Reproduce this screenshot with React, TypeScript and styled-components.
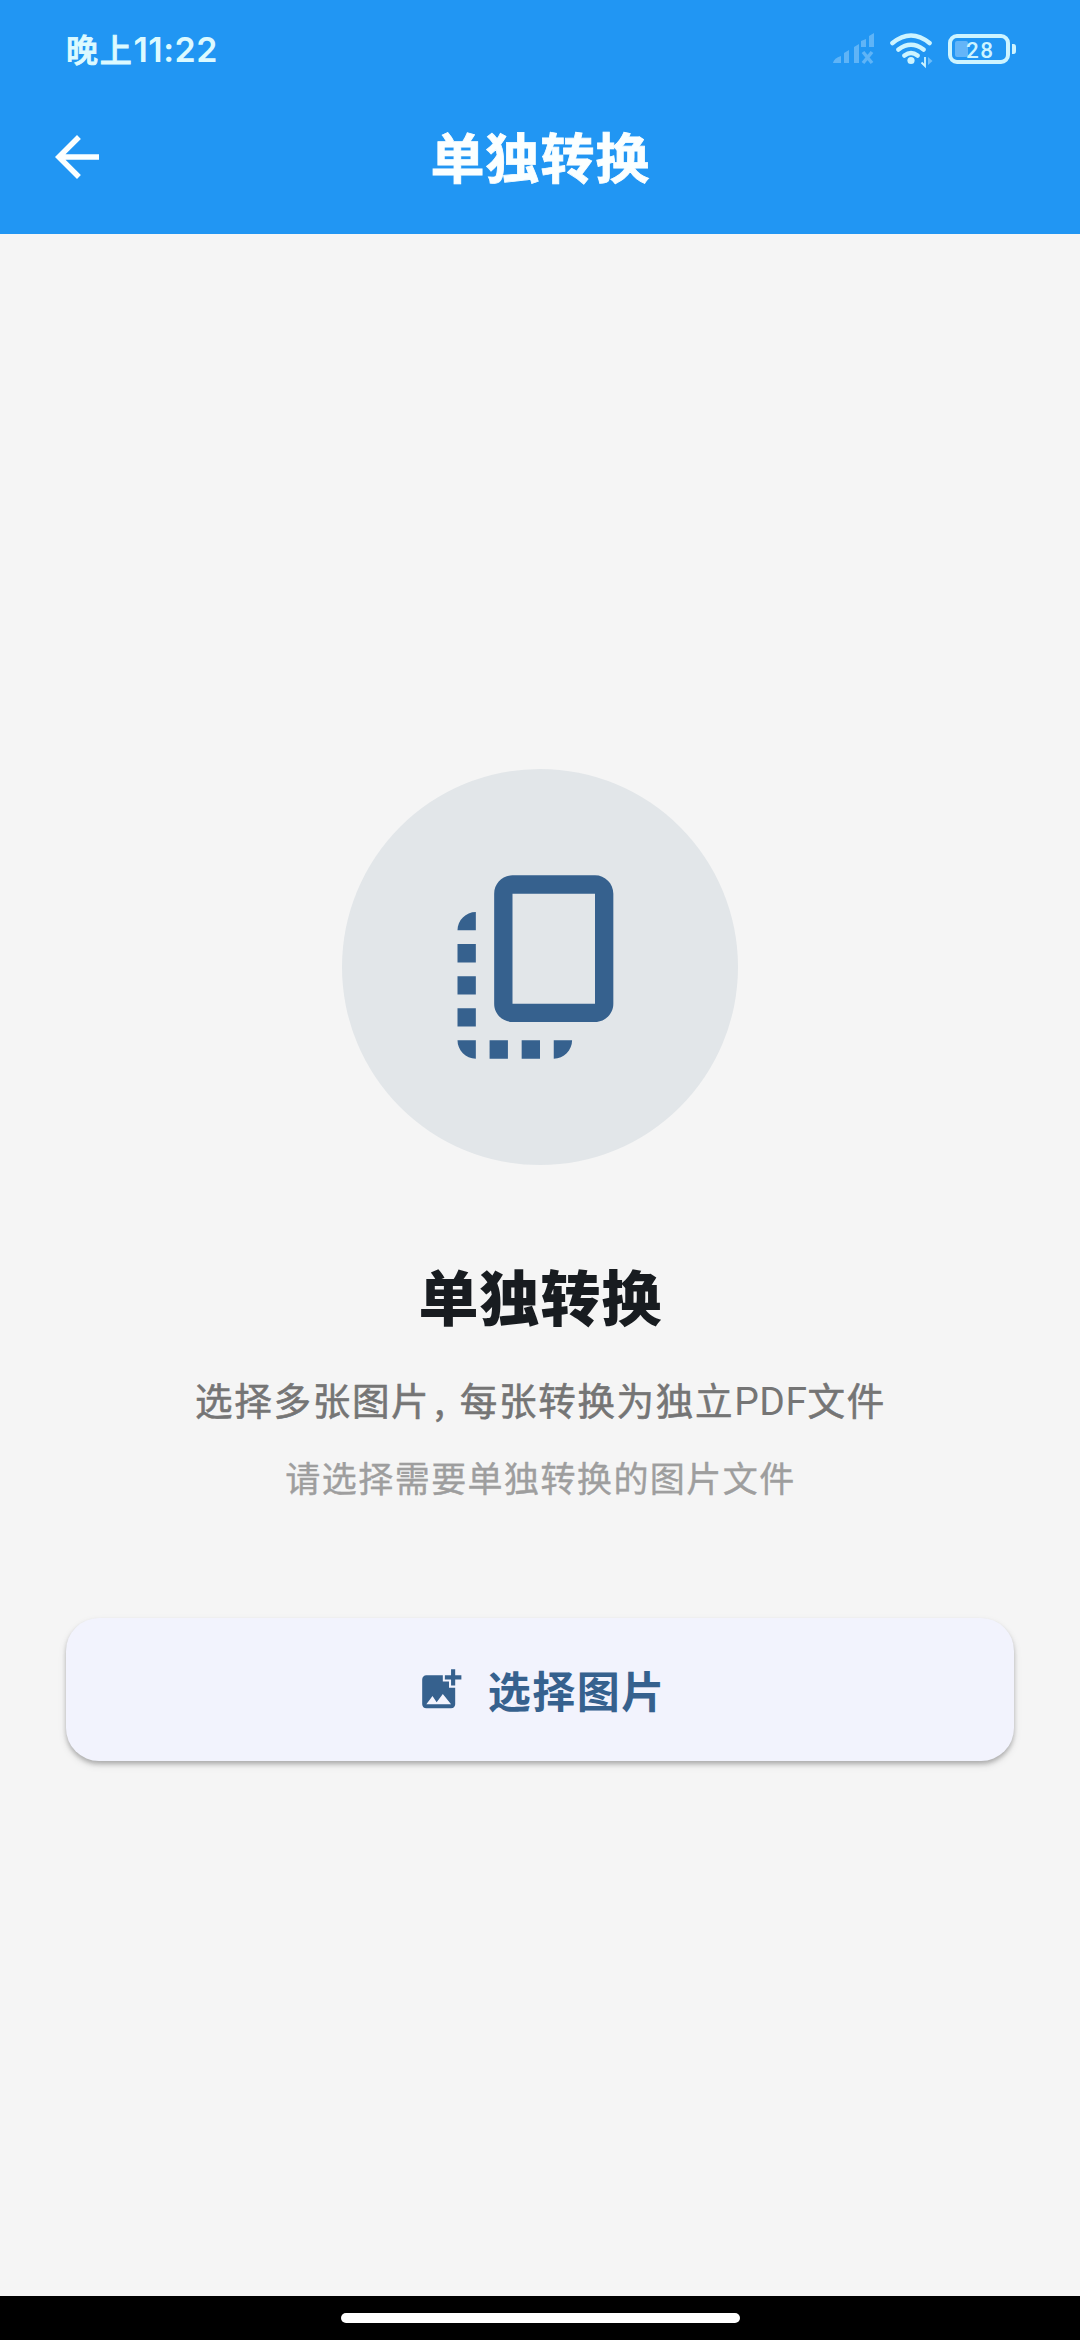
import React from 'react';
import styled, { createGlobalStyle } from 'styled-components';
import { MdAddPhotoAlternate, MdArrowBack } from 'react-icons/md';

const GlobalStyle = createGlobalStyle`
  * { box-sizing: border-box; }
  body {
    margin: 0;
    background: #f5f5f5;
    font-family: 'Noto Sans CJK SC', sans-serif;
  }
`;

const Screen = styled.div`
  width: 1080px;
  height: 2340px;
  display: flex;
  flex-direction: column;
  overflow: hidden;
  background: #f5f5f5;
`;

const Header = styled.header`
  height: 234px;
  background: #2196f3;
  color: #fbffff;
`;

const StatusBar = styled.div`
  height: 80px;
  padding: 16px 62px 0 66px;
  display: flex;
  justify-content: space-between;
  align-items: flex-start;
`;

const Clock = styled.div`
  display: flex;
  height: 64px;
  align-items: center;
  color: #dcfaff;
  font-size: 32px;
  font-weight: 500;
  letter-spacing: 1.7px;
  line-height: 64px;
  -webkit-text-stroke: 0.9px #dcfaff;
`;

const Digits = styled.span`
  padding-top: 3px;
  font-family: Inter, sans-serif;
  font-size: 34px;
  font-weight: 600;
  letter-spacing: 0.5px;
  line-height: 64px;
  -webkit-text-stroke: 0;
`;

const StatusIcons = styled.svg`
  width: 186px;
  height: 40px;
  margin-top: 14px;
`;

const BatteryText = styled.text`
  font-family: Roboto, sans-serif;
  font-size: 22.5px;
  font-weight: 500;
`;

const AppBar = styled.div`
  height: 154px;
  padding: 0 44px;
  display: grid;
  grid-template-columns: 66px 1fr 66px;
  align-items: center;
`;

const BackButton = styled.button`
  width: 66px;
  height: 66px;
  padding: 0;
  border: 0;
  background: none;
  color: inherit;
  font-size: 66px;
  line-height: 0;
`;

const AppTitle = styled.h1`
  margin: 0 0 3px;
  text-align: center;
  text-indent: 1px;
  font-size: 54px;
  font-weight: 700;
  line-height: 80px;
  letter-spacing: 1px;
  -webkit-text-stroke: 0.8px currentColor;
`;

const Content = styled.main`
  flex: 1;
  padding: 0 66px;
  display: flex;
  flex-direction: column;
  align-items: center;
  justify-content: center;
`;

const IconDisc = styled.div`
  width: 396px;
  height: 396px;
  border-radius: 50%;
  display: flex;
  align-items: center;
  justify-content: center;
  background: #e2e6e9;
  color: #36618e;
`;

const Title = styled.h2`
  margin: 90px 0 0;
  color: #181c20;
  font-size: 60px;
  font-weight: 900;
  line-height: 80px;
  letter-spacing: 1px;
  text-indent: 1px;
`;

const Description = styled.p`
  height: 54px;
  margin: 37px 0 0;
  color: #757575;
  font-size: 37.5px;
  font-weight: 400;
  line-height: 54px;
  letter-spacing: 1.7px;
  text-indent: 1px;
  white-space: nowrap;
  -webkit-text-stroke: 0.6px currentColor;
`;

const Comma = styled.span`
  display: inline-block;
  width: 29.5px;
  padding-left: 4px;
  text-indent: 0;
`;

const Latin = styled.span`
  font-family: Roboto, sans-serif;
  font-size: 39px;
  letter-spacing: 0.5px;
  line-height: 0;
  -webkit-text-stroke: 0;
`;

const Hint = styled.p`
  margin: 26px 0 0;
  color: #9e9e9e;
  font-size: 35px;
  line-height: 50px;
  letter-spacing: 1.45px;
  text-indent: 1px;
  white-space: nowrap;
  -webkit-text-stroke: 0.4px currentColor;
`;

const PickButton = styled.button`
  width: 100%;
  height: 143px;
  margin-top: 116px;
  padding: 0;
  border: 0;
  border-radius: 33px;
  display: flex;
  align-items: center;
  justify-content: center;
  gap: 22px;
  background: #f2f3fd;
  box-shadow: 0 3px 4px rgba(0, 0, 0, 0.22), 0 4px 9px rgba(0, 0, 0, 0.1);
  color: #36618e;
  font-family: inherit;
  font-size: 43px;
  font-weight: 700;
  letter-spacing: 1.5px;
  line-height: 64px;
`;

const ButtonLabel = styled.span`
  margin-right: -2px;
  padding-bottom: 2px;
`;

const NavBar = styled.footer`
  height: 44px;
  padding-top: 17px;
  background: #000;
`;

const HomeIndicator = styled.div`
  width: 399px;
  height: 10px;
  margin: 0 auto;
  border-radius: 5px;
  background: #fff;
`;

function DeviceStatus() {
  return (
    <StatusIcons viewBox="832 30 186 40" fill="none">
      <g fill="#5fb4f7">
        <path d="M833 63q1-5 8-7v7zM844 53l5-3v13h-5zM854 47l5-3v19h-5zM861 41l5-2v8h-5zM869 36l5-3v14h-5z" />
        <path d="M863 52l9 11M872 52l-9 11" stroke="#5fb4f7" strokeWidth="3.5" />
      </g>
      <g stroke="#cdf4ff" strokeWidth="4.6" strokeLinecap="round">
        <path d="M892.5 43q18.500-15 37 0M898.500 49.500q12.500-9.500 25 0M904.500 55.500q6.500-5 13 0" />
      </g>
      <circle cx="911" cy="60.500" r="3.600" fill="#cdf4ff" />
      <path d="M925 57v9l-3.500-3.500" stroke="#cdf4ff" strokeWidth="1.800" />
      <path d="M928 65v-8l4.500 4z" fill="#6bbcf9" />
      <rect x="955" y="41" width="13" height="16" rx="2" fill="#64b5f8" />
      <rect x="950" y="36" width="58" height="26" rx="7" stroke="#cdf4ff" strokeWidth="4" />
      <path d="M1012 44h1.500q2.500 0 2.500 3v4q0 3-2.500 3h-1.500z" fill="#cdf4ff" />
      <BatteryText x="979.500" y="57.500" textAnchor="middle" fill="#cdf4ff" textLength="27">28</BatteryText>
    </StatusIcons>
  );
}

function BringToFrontIcon() {
  return (
    <svg width="220" height="220" viewBox="0 0 24 24" fill="currentColor">
      <path
        fillRule="evenodd"
        d="M9 2h9c1.100 0 2 .9 2 2v12c0 1.100-.9 2-2 2H9c-1.100 0-2-.9-2-2V4c0-1.100.9-2 2-2zM9 4v12h9V4z"
      />
      <path d="M3 8c0-1.100.9-2 2-2v2zM3 9.500h2v2H3zM3 13h2v2H3zM3 16.500h2v2H3zM3 20h2v2c-1.100 0-2-.9-2-2zM6.500 20h2v2h-2zM10 20h2v2h-2zM13.500 20h2c0 1.100-.9 2-2 2z" />
    </svg>
  );
}

export default function App() {
  return (
    <>
      <GlobalStyle />
      <Screen lang="zh-CN">
        <Header>
          <StatusBar>
            <Clock>晚上<Digits>11:22</Digits></Clock>
            <DeviceStatus />
          </StatusBar>
          <AppBar>
            <BackButton aria-label="返回"><MdArrowBack /></BackButton>
            <AppTitle>单独转换</AppTitle>
          </AppBar>
        </Header>
        <Content>
          <IconDisc><BringToFrontIcon /></IconDisc>
          <Title>单独转换</Title>
          <Description>
            选择多张图片<Comma>,</Comma>每张转换为独立<Latin>PDF</Latin>文件
          </Description>
          <Hint>请选择需要单独转换的图片文件</Hint>
          <PickButton>
            <MdAddPhotoAlternate size={49.5} />
            <ButtonLabel>选择图片</ButtonLabel>
          </PickButton>
        </Content>
        <NavBar><HomeIndicator /></NavBar>
      </Screen>
    </>
  );
}
